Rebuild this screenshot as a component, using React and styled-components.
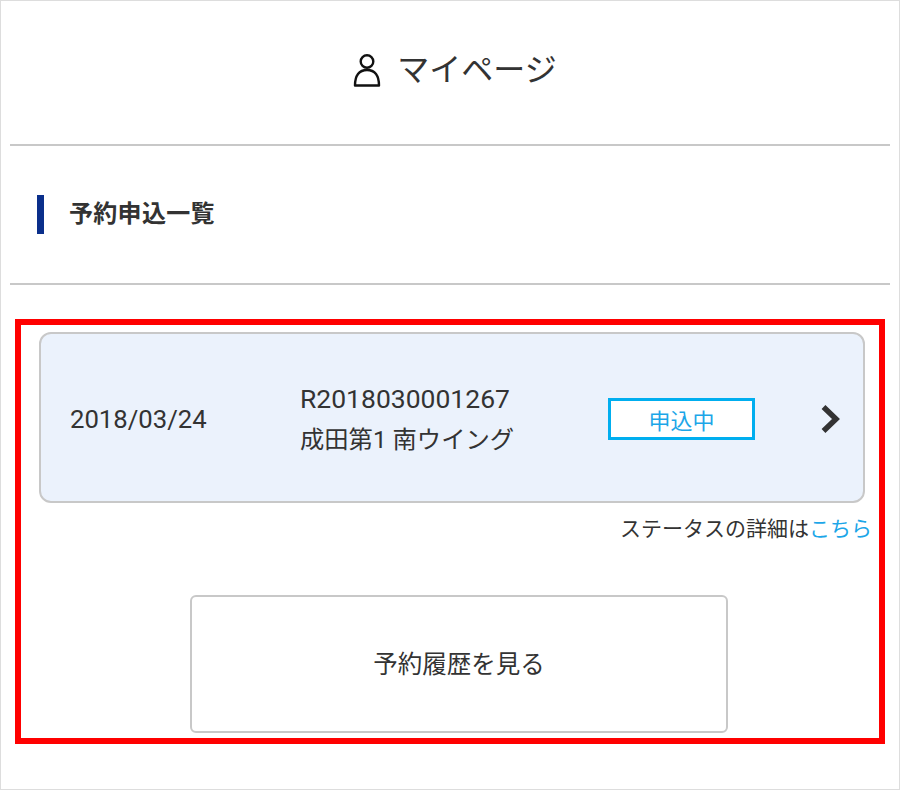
import React from "react";
import styled, { createGlobalStyle } from "styled-components";

const GlobalStyle = createGlobalStyle`
  html, body {
    margin: 0;
    padding: 0;
    background: #fff;
  }
  body {
    font-family: Roboto, "Noto Sans CJK JP", sans-serif;
    color: #333;
  }
`;

const Page = styled.div`
  box-sizing: border-box;
  width: 900px;
  height: 790px;
  border: 1px solid #ddd;
  padding: 0 9px;
  overflow: hidden;
`;

const Header = styled.h1`
  box-sizing: border-box;
  height: 145px;
  margin: 0;
  padding: 0 0 12px 10px;
  border-bottom: 2px solid #c8c8c8;
  display: flex;
  align-items: center;
  justify-content: center;
  gap: 16px;
  font-size: 32px;
  font-weight: 400;
  color: #333;
`;

const UserIcon = styled.svg`
  margin-top: 6px;
  width: 28px;
  height: 34px;
`;

const SectionHead = styled.div`
  box-sizing: border-box;
  height: 139px;
  border-bottom: 2px solid #c8c8c8;
  display: flex;
  align-items: center;
  padding: 0 0 0 27px;
`;

const SectionTitle = styled.h2`
  margin: 0;
  padding-left: 25px;
  border-left: 7px solid #0a2f8b;
  height: 39px;
  line-height: 39px;
  font-size: 24px;
  letter-spacing: 0.3px;
  font-weight: 700;
  color: #333;
`;

const Highlight = styled.section`
  box-sizing: border-box;
  width: 870px;
  height: 425px;
  margin: 34px 0 0 5px;
  border: 6px solid #f00;
  padding: 7px 14px 0 18px;
`;

const Card = styled.div`
  box-sizing: border-box;
  height: 171px;
  background: #ebf2fc;
  border: 2px solid #c8c8c8;
  border-radius: 12px;
  display: flex;
  align-items: center;
  padding: 2px 22px 0 29px;
`;

const DateText = styled.div`
  width: 230px;
  font-size: 25.7px;
  color: #333;
`;

const Info = styled.div`
  width: 308px;
  line-height: 41px;
  color: #333;
`;

const InfoCode = styled.div`
  font-size: 26.5px;
`;

const InfoPlace = styled.div`
  font-size: 24.3px;
`;

const Status = styled.div`
  box-sizing: border-box;
  width: 147px;
  height: 42px;
  border: 3px solid #00aeef;
  background: #fff;
  color: #1ca6e8;
  font-size: 22px;
  display: flex;
  align-items: center;
  justify-content: center;
`;

const Arrow = styled.svg`
  margin-left: auto;
  width: 20px;
  height: 28px;
`;

const Note = styled.p`
  margin: 10px -7px 0 0;
  text-align: right;
  font-size: 21px;
  line-height: 32px;
  color: #333;
`;

const NoteLink = styled.a`
  color: #1ca6e8;
`;

const HistoryButton = styled.button`
  display: flex;
  align-items: center;
  justify-content: center;
  box-sizing: border-box;
  width: 538px;
  height: 138px;
  margin: 50px 0 0 151px;
  padding: 0 0 4px;
  background: #fff;
  border: 2px solid #c8c8c8;
  border-radius: 6px;
  font-family: inherit;
  font-size: 24.5px;
  color: #333;
`;

export default function App() {
  return (
    <>
      <GlobalStyle />
      <Page>
        <Header>
          <UserIcon viewBox="0 0 28 34" fill="none" stroke="#111" strokeWidth="2.4">
            <circle cx="14" cy="8.5" r="6.3" />
            <path d="M2 32.5h24c0-10-4-15.5-12-15.5S2 22.500 2 32.500z" strokeLinejoin="round" />
          </UserIcon>
          マイページ
        </Header>
        <SectionHead>
          <SectionTitle>予約申込一覧</SectionTitle>
        </SectionHead>
        <Highlight>
          <Card>
            <DateText>2018/03/24</DateText>
            <Info>
              <InfoCode>R2018030001267</InfoCode>
              <InfoPlace>成田第1 南ウイング</InfoPlace>
            </Info>
            <Status>申込中</Status>
            <Arrow viewBox="0 0 20 28" fill="none" stroke="#333" strokeWidth="5.5">
              <path d="M2.500 2L15 14L2.500 26" />
            </Arrow>
          </Card>
          <Note>
            ステータスの詳細は<NoteLink>こちら</NoteLink>
          </Note>
          <HistoryButton>予約履歴を見る</HistoryButton>
        </Highlight>
      </Page>
    </>
  );
}
